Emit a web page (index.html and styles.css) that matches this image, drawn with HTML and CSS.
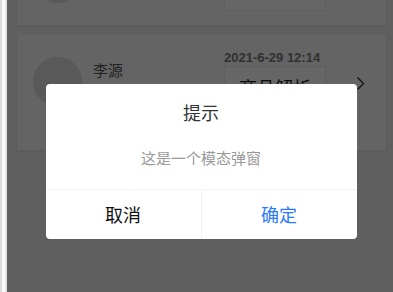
FILE: index.html
```html
<!DOCTYPE html>
<html lang="zh-CN">
<head>
    <meta charset="UTF-8">
    <title>订单列表</title>
    <link rel="stylesheet" href="styles.css">
</head>
<body>
<div class="edge"></div>
<div class="page">
    <div class="list">
        <div class="card card-short">
            <div class="avatar"></div>
            <div class="spacer"></div>
            <div class="info">
                <div class="tag"></div>
            </div>
            <div class="arrow-space"></div>
        </div>
        <div class="card">
            <div class="avatar"></div>
            <div class="name">李源</div>
            <div class="spacer"></div>
            <div class="info">
                <div class="date">2021-6-29 12:14</div>
                <div class="tag">商品解析</div>
            </div>
            <svg class="arrow" width="9" height="15" viewBox="0 0 9 15"><path d="M1.5 1.5 L7.5 7.5 L1.5 13.5" fill="none" stroke="#333" stroke-width="1.4"/></svg>
        </div>
    </div>

    <div class="mask">
        <div class="modal">
            <div class="modal-title">提示</div>
            <div class="modal-content">这是一个模态弹窗</div>
            <div class="modal-footer">
                <div class="btn btn-cancel">取消</div>
                <div class="btn btn-confirm">确定</div>
            </div>
        </div>
    </div>
</div>
</body>
</html>
```

FILE: styles.css
```css
body {
    margin: 0;
    padding: 0;
    display: flex;
    height: 292px;
    overflow: hidden;
    font-family: "Liberation Sans", "Noto Sans CJK SC", sans-serif;
}
.edge {
    width: 7px;
    flex-shrink: 0;
    background: linear-gradient(to right, #dcdcdc 0, #dcdcdc 2px, #fafafa 2px, #fafafa 5px, #e4e4e4 5px);
}
.page {
    flex: 1;
    position: relative;
    overflow: hidden;
    background-color: #eeeeee;
}
.list {
    margin-top: -68px;
    display: flex;
    flex-direction: column;
    gap: 10px;
}
.card {
    margin: 0 7px 0 10px;
    height: 115px;
    padding: 0 21px 0 16px;
    display: flex;
    align-items: flex-start;
    background-color: #fafafa;
    box-shadow: 0 1px 3px rgba(0, 0, 0, 0.08);
}
.card-short {
    height: 93px;
}
.avatar {
    width: 49px;
    height: 49px;
    margin-top: 22px;
    border-radius: 50%;
    background-color: #dedede;
    flex-shrink: 0;
}
.name {
    margin: 26px 0 0 11px;
    font-size: 15px;
    line-height: 20px;
    color: #555;
}
.spacer {
    flex: 1;
}
.info {
    width: 102px;
    margin-top: 15px;
}
.card-short .info {
    margin-top: 31px;
}
.date {
    font-size: 13px;
    line-height: 16px;
    font-weight: bold;
    color: #7a7a7a;
}
.tag {
    height: 38px;
    border: 1px solid #ececec;
    background-color: #fff;
    font-size: 18px;
    line-height: 44px;
    text-align: center;
    color: #222;
}
.card-short .tag {
    height: 46px;
}
.arrow {
    margin: 41px 0 0 30px;
    flex-shrink: 0;
}
.arrow-space {
    width: 39px;
    flex-shrink: 0;
}
.mask {
    position: absolute;
    top: 0;
    left: 0;
    right: 0;
    bottom: 0;
    background-color: rgba(0, 0, 0, 0.6);
    display: flex;
    justify-content: center;
    align-items: flex-start;
    padding-top: 84px;
    padding-left: 2px;
}
.modal {
    width: 311px;
    background-color: #fff;
    border-radius: 4px;
    overflow: hidden;
    font-family: "Noto Sans CJK SC", sans-serif;
}
.modal-title {
    padding-top: 16px;
    font-size: 18px;
    line-height: 24px;
    text-align: center;
    color: #333;
}
.modal-content {
    padding: 23px 16px 20px;
    font-size: 15px;
    line-height: 22px;
    text-align: center;
    color: #999;
}
.modal-footer {
    display: flex;
    border-top: 1px solid #f2f2f2;
}
.btn {
    flex: 1;
    height: 49px;
    line-height: 49px;
    font-size: 18px;
    text-align: center;
}
.btn-cancel {
    color: #111;
    border-right: 1px solid #f2f2f2;
}
.btn-confirm {
    color: #2979ff;
}
```
